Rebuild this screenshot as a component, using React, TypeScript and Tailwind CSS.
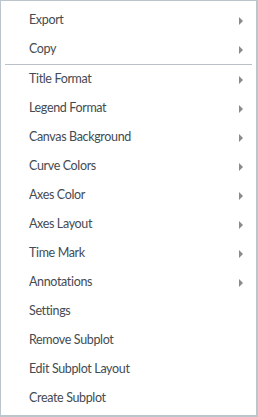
const groups: { label: string; sub?: boolean }[][] = [
  [
    { label: "Export", sub: true },
    { label: "Copy", sub: true },
  ],
  [
    { label: "Title Format", sub: true },
    { label: "Legend Format", sub: true },
    { label: "Canvas Background", sub: true },
    { label: "Curve Colors", sub: true },
    { label: "Axes Color", sub: true },
    { label: "Axes Layout", sub: true },
    { label: "Time Mark", sub: true },
    { label: "Annotations", sub: true },
    { label: "Settings" },
    { label: "Remove Subplot" },
    { label: "Edit Subplot Layout" },
    { label: "Create Subplot" },
  ],
];

function MenuRow({ label, sub }: { label: string; sub?: boolean }) {
  return (
    <div className="flex h-[29px] items-center justify-between pl-7 pr-[13px] text-[12.5px] tracking-[-0.35px] text-[#444b52] hover:bg-[#eef2f6]">
      <span>{label}</span>
      {sub && (
        <span className="h-0 w-0 border-y-4 border-l-4 border-y-transparent border-l-[#8a8a8a]" />
      )}
    </div>
  );
}

export default function App() {
  return (
    <div
      className="h-[417px] w-[258px] bg-white"
      style={{ fontFamily: "Lato, 'Noto Sans', sans-serif" }}
    >
      <div className="flex h-full flex-col border-t border-l border-r-2 border-b-2 border-[#bcc4cc] pt-[5px]">
        {groups.map((g, i) => (
          <div key={i}>
            {i > 0 && <div className="mx-1 h-px bg-[#b9c0c7]" />}
            {g.map((item) => (
              <MenuRow key={item.label} {...item} />
            ))}
          </div>
        ))}
      </div>
    </div>
  );
}
